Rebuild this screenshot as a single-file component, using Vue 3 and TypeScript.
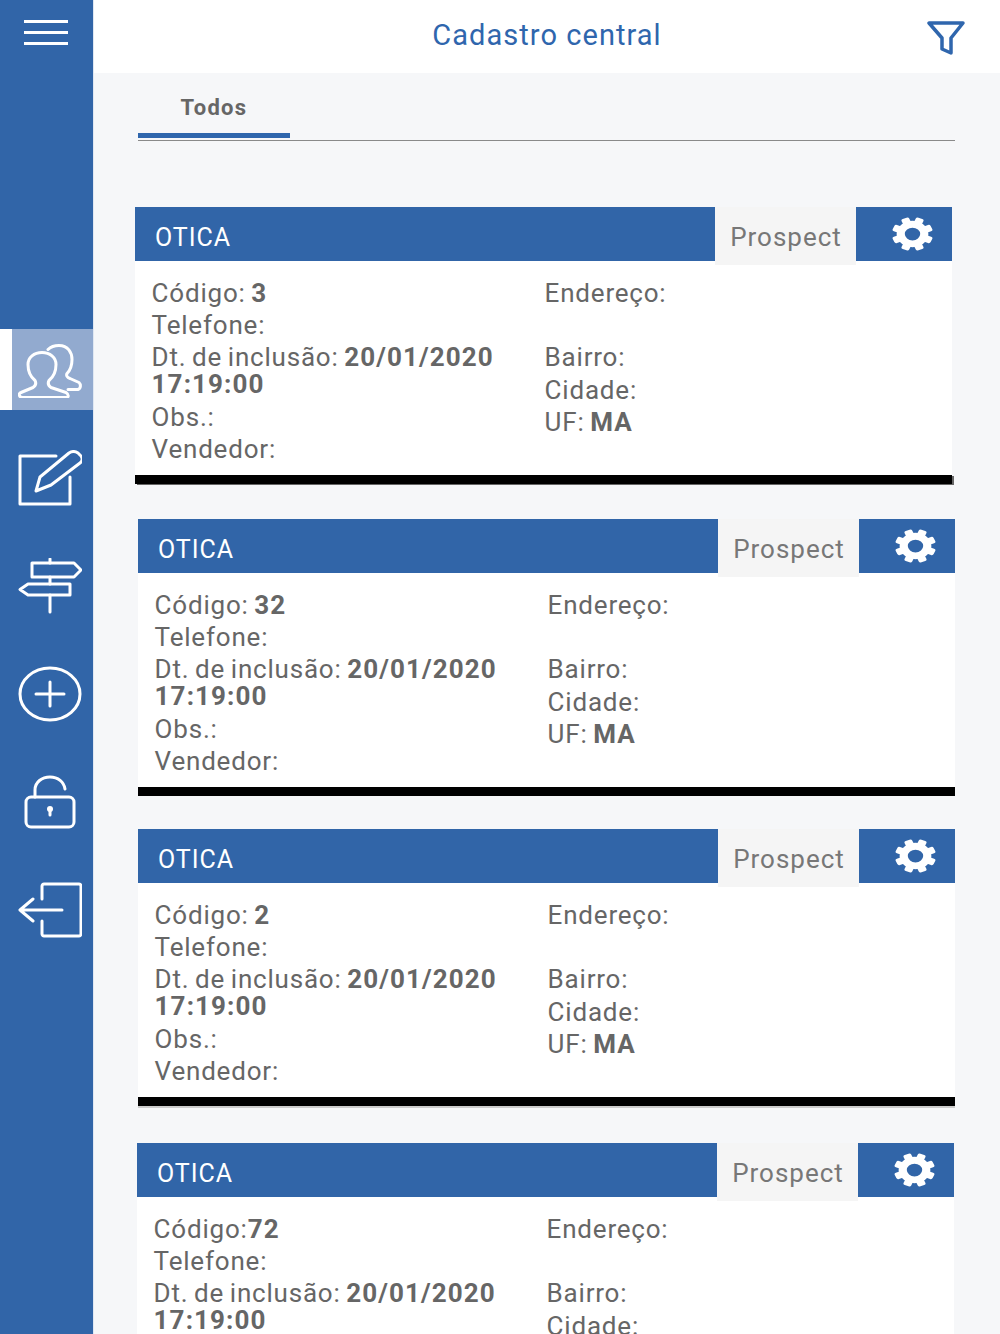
<script setup lang="ts">
interface Cliente {
  codigo: string;
  colon: string;
  offset: number;
  gap: number;
  shadow: string;
}

// os cards do print não estão alinhados entre si
const clientes: Cliente[] = [
  { codigo: "3", colon: "Código: ", offset: 0, gap: 35, shadow: "shadow-dark" },
  { codigo: "32", colon: "Código: ", offset: 3, gap: 33, shadow: "" },
  { codigo: "2", colon: "Código: ", offset: 3, gap: 37, shadow: "shadow-light" },
  { codigo: "72", colon: "Código:", offset: 2, gap: 0, shadow: "" },
];

const teeth = [22.5, 67.5, 112.5, 157.5, 202.5, 247.5, 292.5, 337.5];
</script>

<template>
  <div class="page">
    <aside class="sidebar">
      <button class="menu-btn" type="button" aria-label="Menu">
        <span></span><span></span><span></span>
      </button>
      <nav class="side-nav">
        <a class="side-item active">
          <svg class="side-icon" viewBox="0 -1.500 64 56">
            <path d="M17 37C12 33 10 27 10 21 10 14 16 9 24 9s14 5 14 12c0 6-2 12-7 16-1 2-1 5 2 7l15 5c3 2 3 5 0 5H5c-4 0-5-4-2-5l12-5c3-2 3-5 2-7z" />
            <path d="M30 6c3-3 7-4 11-4 9 0 13 7 13 14 0 6-2 11-5 14-1 2 0 4 3 5l9 4c2 2 2 6-1 7H50" />
          </svg>
        </a>
        <a class="side-item">
          <svg class="side-icon" viewBox="0 0 64 56">
            <path d="M38 6H2v48h50V27" />
            <path d="M18 41l4-14L51 3c3-2 6-2 9 0l3 3c2 3 2 5-1 7L33 35z" />
          </svg>
        </a>
        <a class="side-item">
          <svg class="side-icon" viewBox="0 0 64 56">
            <path d="M14 5h42l7 7-7 7H14z" />
            <path d="M52 26v11H10l-8-5.500 8-5.500h42" />
            <path d="M32 1v4M32 19v7M32 37v17" />
          </svg>
        </a>
        <a class="side-item">
          <svg class="side-icon" viewBox="0 0 64 56">
            <ellipse cx="32" cy="28" rx="30" ry="26" />
            <path d="M18 28h28M32 16v24" />
          </svg>
        </a>
        <a class="side-item">
          <svg class="side-icon lock" viewBox="0 0 52 54">
            <path d="M11 22V15C11 7 18 2 26 2s14 5 15 12" />
            <rect x="2" y="22" width="48" height="30" rx="5" />
            <circle class="solid" cx="26" cy="34" r="3" />
            <path d="M26 35v5" />
          </svg>
        </a>
        <a class="side-item">
          <svg class="side-icon" viewBox="0 0 64 54">
            <path d="M24 16V3c0-1 1-2 2-2h35c1 0 2 1 2 2v48c0 1-1 2-2 2H26c-1 0-2-1-2-2V38" />
            <path d="M44 27H2M15 16L2 27l13 11" />
          </svg>
        </a>
      </nav>
    </aside>

    <div class="content">
      <header class="topbar">
        <h1 class="title">Cadastro central</h1>
        <svg class="filter" viewBox="0 0 38 36" aria-label="Filtro">
          <path d="M2 3h34L24 18v15l-9-4V18z" />
        </svg>
      </header>

      <main class="main">
        <div class="tabs">
          <span class="tab">Todos</span>
        </div>

        <section
          v-for="cliente in clientes"
          :key="cliente.codigo"
          class="card"
          :class="cliente.shadow"
          :style="{ marginLeft: cliente.offset + 'px', marginBottom: cliente.gap + 'px' }"
        >
          <div class="card-head">
            <div class="card-name">OTICA</div>
            <div class="card-status">Prospect</div>
            <div class="card-gear">
              <svg class="gear" viewBox="-20 -20 40 40" preserveAspectRatio="none">
                <rect v-for="deg in teeth" :key="deg" x="-4" y="-20" width="8" height="10" rx="2" :transform="`rotate(${deg})`" />
                <circle class="gear-ring" r="11.5" />
              </svg>
            </div>
          </div>
          <div class="card-body">
            <div class="col-left">
              <p>{{ cliente.colon }}<b>{{ cliente.codigo }}</b></p>
              <p>Telefone:</p>
              <p>Dt. de inclusão: <b>20/01/2020 17:19:00</b></p>
              <p>Obs.:</p>
              <p>Vendedor:</p>
            </div>
            <div class="col-right">
              <p>Endereço:</p>
              <p class="blank">&nbsp;</p>
              <p>Bairro:</p>
              <p>Cidade:</p>
              <p>UF: <b>MA</b></p>
            </div>
          </div>
          <div class="card-foot"></div>
        </section>
      </main>
    </div>
  </div>
</template>

<style>
html,
body {
  margin: 0;
  background: #f6f7f9;
}
</style>

<style scoped>
.page {
  display: flex;
  height: 100vh;
  overflow: hidden;
  font-family: Roboto, "Liberation Sans", sans-serif;
  color: #666;
}

.sidebar {
  flex: 0 0 93px;
  background: #3165a8;
  border-right: 1px solid #dfe7f2;
  box-sizing: content-box;
}

.menu-btn {
  display: flex;
  flex-direction: column;
  gap: 8px;
  width: 44px;
  margin: 20px 0 0 24px;
  padding: 0;
  border: 0;
  background: none;
}

.menu-btn span {
  display: block;
  height: 3px;
  background: #fff;
}

.side-nav {
  display: flex;
  flex-direction: column;
  gap: 27px;
  margin-top: 284px;
}

.side-item {
  display: flex;
  align-items: center;
  justify-content: flex-end;
  height: 81px;
  padding-right: 11px;
  box-sizing: border-box;
}

.side-item.active {
  background: #92aacf;
  box-shadow: inset 12px 0 0 #fff;
}

.side-icon {
  width: 64px;
  height: 56px;
  fill: none;
  stroke: #fff;
  stroke-width: 3;
  stroke-linejoin: round;
  stroke-linecap: round;
}

.side-icon.lock {
  width: 52px;
  height: 54px;
  margin-right: 6px;
}

.side-icon .solid {
  fill: #fff;
  stroke: none;
}

.content {
  flex: 1;
  min-width: 0;
}

.topbar {
  position: relative;
  display: flex;
  align-items: center;
  justify-content: center;
  height: 73px;
  background: #fff;
}

.title {
  margin: 0 0 4px 0;
  font-size: 29px;
  font-weight: 400;
  letter-spacing: 1.05px;
  color: #2f66ad;
}

.filter {
  position: absolute;
  right: 35px;
  top: 20px;
  width: 38px;
  height: 36px;
  fill: none;
  stroke: #2f66ad;
  stroke-width: 3.5;
  stroke-linejoin: round;
}

.main {
  padding-left: 41px;
  width: 820px;
}

.tabs {
  margin: 0 0 66px 3px;
  height: 68px;
  width: 817px;
  border-bottom: 1px solid #8a8a8a;
  box-sizing: border-box;
}

.tab {
  display: block;
  width: 152px;
  height: 65px;
  box-sizing: border-box;
  padding-top: 21px;
  text-align: center;
  font-size: 22px;
  font-weight: 700;
  letter-spacing: 1.3px;
  line-height: 28px;
  border-bottom: 5px solid #2f66ad;
}

.card {
  width: 817px;
  background: #fff;
}

.shadow-dark .card-foot {
  box-shadow: 2px 1px 0 #666;
}

.shadow-light .card-foot {
  box-shadow: 0 2px 0 #ccc;
}

.card-head {
  display: flex;
  height: 54px;
}

.card-name {
  flex: 0 0 580px;
  background: #3165a8;
  color: #fff;
  font-size: 25px;
  line-height: 62px;
  letter-spacing: 1px;
  padding-left: 20px;
  box-sizing: border-box;
}

.card-status {
  flex: 0 0 141px;
  height: 58px;
  padding-left: 1px;
  box-sizing: border-box;
  background: #f5f5f5;
  font-size: 26px;
  line-height: 60px;
  letter-spacing: 1px;
  text-align: center;
  color: #777;
}

.card-gear {
  flex: 1;
  display: flex;
  align-items: center;
  justify-content: center;
  background: #3165a8;
}

.gear {
  width: 41px;
  height: 34px;
  margin: 0 0 0 16px;
  fill: #fff;
}

.gear-ring {
  fill: none;
  stroke: #fff;
  stroke-width: 8;
}

.card-body {
  display: flex;
  height: 214px;
  padding: 18.6px 0 0 16.6px;
  box-sizing: border-box;
  font-size: 26px;
  line-height: 27px;
  letter-spacing: 0.8px;
  word-spacing: -1.6px;
}

.card-body b {
  letter-spacing: 1.1px;
  word-spacing: 0;
}

.col-left {
  flex: 0 0 393px;
}

.col-right {
  flex: 1;
}

.card-body p {
  margin: 0 0 5.4px;
}

.card-foot {
  height: 9px;
  background: #000;
}
</style>
